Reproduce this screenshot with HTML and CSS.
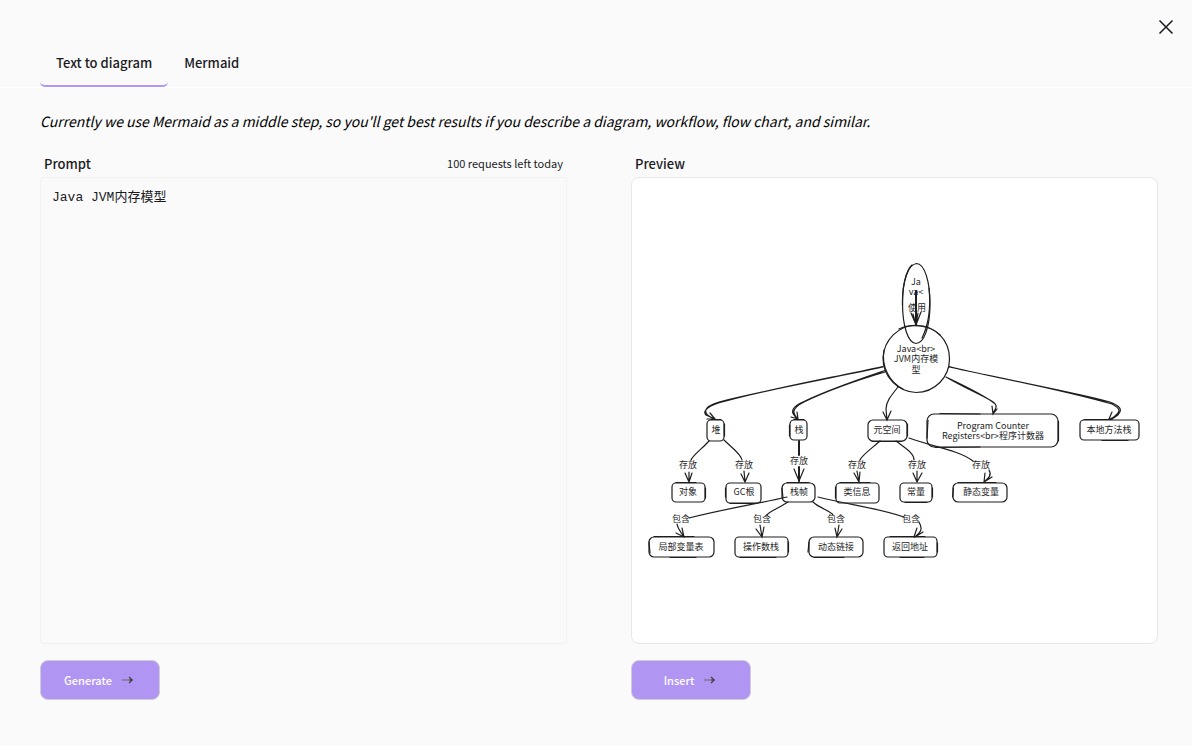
FILE: index.html
```html
<!DOCTYPE html>
<html lang="en">
<head>
    <meta charset="UTF-8">
    <meta name="viewport" content="width=device-width, initial-scale=1.0">
    <title>Text to diagram</title>
    <link rel="stylesheet" href="styles.css">
</head>
<body>

    <button type="button" class="close" aria-label="Close">
        <svg viewBox="0 0 16 16" width="16" height="16"><path d="M1.5 1.5l13 13M14.5 1.5l-13 13"/></svg>
    </button>

    <!-- Tabs -->
    <header class="tabs" role="tablist">
        <button type="button" class="tab active" role="tab" aria-selected="true">Text to diagram</button>
        <button type="button" class="tab" role="tab" aria-selected="false">Mermaid</button>
    </header>

    <main>
        <p class="description">Currently we use Mermaid as a middle step, so you'll get best results if you describe a diagram, workflow, flow chart, and similar.</p>

        <div class="panels">
            <!-- Prompt -->
            <section class="panel">
                <div class="panel-header">
                    <label for="prompt">Prompt</label>
                    <span class="limit">100 requests left today</span>
                </div>
                <textarea id="prompt" class="panel-box">Java JVM内存模型</textarea>
                <button type="button" class="action">
                    Generate
                    <svg viewBox="0 0 16 16" width="16" height="16"><path class="shaft" d="M2 8h8"/><path d="M9 4.8l3.200 3.200-3.200 3.200M9 8h3"/></svg>
                </button>
            </section>

            <!-- Preview -->
            <section class="panel">
                <div class="panel-header">
                    <h2>Preview</h2>
                </div>
                <div class="panel-box preview">
                    <svg class="diagram" viewBox="632 178 525 465" role="img" aria-label="Preview">
                        <!-- start node and main circle -->
                        <path d="M916 263.500C925 263 930 283 930 304C930 327 924 343.500 916 343.500C908 343 902.500 326 902.500 303C902.500 281 908 264 917 263.500"/>
                        <path d="M912 265C906 270 902 287 902.500 305M929 288C931 308 928 326 922 338"/>
                        <path d="M916 325.500C935 325 949.500 340 949.500 359C949.500 377 935 392.500 916 392.500C898 392 883 377 883 358C884 340 898 325.500 917 325"/>
                        <path d="M884 350C881 367 890 383 903 389M899 329C911 323 930 325 940 335"/>
                        <path class="bold" d="M916 291v33"/>
                        <path d="M911 313l5 12 5-13M913 314l3 11 2-12"/>

                        <!-- edges: circle to first row -->
                        <path d="M883 366.500C825 379 770 389 726 401C708 405 702 411 706 415L715 419M883 367C822 380 762 391 719 402C702 407 702 414 715 419M707 419l8 0-5-6"/>
                        <path d="M885 370.500C860 379 830 389 805 401C791 407 789 412 798 419M885 372C858 380 829 390 804 402C790 409 793 414 798 419M791 417l7 2-1-7"/>
                        <path d="M898 387C890 397 886 402 886 409L887 420M883 412l4 8 4-9"/>
                        <path d="M946 377C963 387 977 393 990 400C997 404 998 406 993 413M946 377C965 386 985 396 994 403M992 406l1 8 4-5"/>
                        <path d="M949 366.500C1000 379 1064 390 1110 402C1123 407 1124 412 1112 419M949 367C1004 379 1060 389 1112 404C1121 409 1122 411 1111 419M1109 419l3-7M1110 419l8-4"/>

                        <!-- edges: first row to second row -->
                        <path d="M709 441C703 448 693 455 691 460M689 472v10M685 473l4 9 3-9"/>
                        <path d="M724 440C731 447 741 454 742 460M744 471l1 11M741 474l4 8 4-9"/>
                        <path class="bold" d="M799 441v14M799 467v14"/>
                        <path d="M794 469l5 12 5-12"/>
                        <path d="M880 441C871 449 862 455 860 460M857 471l2 11M854 473l5 9 1-10"/>
                        <path d="M896 441C905 448 914 453 914 460M917 471v11M913 473l4 9 5-9"/>
                        <path d="M909 438C930 446 959 450 973 461M989 470C992 475 989 478 984 482M984 482l1-9M984 482l8-5"/>

                        <!-- edges: second row to third row -->
                        <path d="M787 497C757 504 724 509 689 518M677 524C678 530 682 533 684 537M676 533l8 4-2-9"/>
                        <path d="M788 502C779 508 770 511 767 515M760 525l2 12M756 529l6 8 2-10"/>
                        <path d="M813 502C819 508 831 511 833 515M839 525l-2 12M835 528l2 9 5-8"/>
                        <path d="M818 497C850 505 878 508 904 517M919 522C923 529 921 532 915 537M914 537l3-9M915 537l8-5"/>

                        <!-- nodes -->
                        <rect x="707" y="420" width="17" height="21" rx="4"/>
                        <rect x="790" y="420" width="17" height="20" rx="4"/>
                        <rect x="868" y="420" width="39" height="21" rx="5"/>
                        <rect x="927" y="414" width="131" height="33" rx="7"/>
                        <rect x="1080" y="420" width="59" height="20" rx="4"/>
                        <rect x="672" y="483" width="33" height="19" rx="4"/>
                        <rect x="726" y="483" width="35" height="20" rx="4"/>
                        <rect x="782" y="483" width="33" height="19" rx="5"/>
                        <rect x="836" y="483" width="43" height="20" rx="4"/>
                        <rect x="900" y="483" width="32" height="19" rx="4"/>
                        <rect x="953" y="483" width="54" height="19" rx="5"/>
                        <rect x="649" y="537" width="65" height="20" rx="5"/>
                        <rect x="735" y="537" width="53" height="20" rx="4"/>
                        <rect x="809" y="537" width="54" height="20" rx="5"/>
                        <rect x="884" y="537" width="53" height="20" rx="4"/>
                        <path d="M711 419.500h10M724.500 424v12M794 419.500h10M789.500 425v11M872 441.500h30M907.500 424v12M940 413.500l40 .5M928 420l-1 18M935 447.500l45-.5M1058.500 421v20M1084 419.500h28M1102 440.500h26M676 482.500h20M705.500 488v10M730 503.500h26M725.500 488v9M787 482.500h22M782 488l1 10M840 482.500h30M835.500 487v11M905 502.500h22M932.500 488v9M958 482.500h38M953.500 488l-1 9M654 536.500h40M670 557.500h26M649 542l1 11M740 557.500h36M788.500 542v10M814 557.500h30M809 542l-1 10M890 536.500h35M937.500 543v9M900 557.500h24"/>

                        <!-- labels -->
                        <g class="labels">
                            <text x="916" y="285">Ja</text>
                            <text x="916" y="295">va&lt;</text>
                            <text x="917" y="311">使用</text>
                            <text x="916" y="352">Java&lt;br&gt;</text>
                            <text x="916" y="362">JVM内存模</text>
                            <text x="916" y="373">型</text>
                            <text x="716" y="433">堆</text>
                            <text x="799" y="433">栈</text>
                            <text x="887" y="433">元空间</text>
                            <text x="993" y="429">Program Counter</text>
                            <text x="993" y="439">Registers&lt;br&gt;程序计数器</text>
                            <text x="1109" y="433">本地方法栈</text>
                            <text x="688" y="468">存放</text>
                            <text x="744" y="468">存放</text>
                            <text x="799" y="464">存放</text>
                            <text x="857" y="468">存放</text>
                            <text x="917" y="468">存放</text>
                            <text x="981" y="468">存放</text>
                            <text x="688" y="495">对象</text>
                            <text x="744" y="495">GC根</text>
                            <text x="799" y="495">栈帧</text>
                            <text x="857" y="495">类信息</text>
                            <text x="916" y="495">常量</text>
                            <text x="981" y="495">静态变量</text>
                            <text x="681" y="522">包含</text>
                            <text x="762" y="522">包含</text>
                            <text x="836" y="522">包含</text>
                            <text x="911" y="522">包含</text>
                            <text x="681" y="550">局部变量表</text>
                            <text x="761" y="550">操作数栈</text>
                            <text x="836" y="550">动态链接</text>
                            <text x="910" y="550">返回地址</text>
                        </g>
                    </svg>
                </div>
                <button type="button" class="action">
                    Insert
                    <svg viewBox="0 0 16 16" width="16" height="16"><path class="shaft" d="M2 8h8"/><path d="M9 4.800l3.200 3.200-3.200 3.200M9 8h3"/></svg>
                </button>
            </section>
        </div>
    </main>

</body>
</html>
```
FILE: styles.css
```css
* {
    box-sizing: border-box;
}
body {
    display: flex;
    flex-direction: column;
    min-height: 100vh;
    margin: 0;
    background-color: #fafafa;
    color: #1b1b1f;
    font-family: "Noto Sans CJK SC", "Open Sans", sans-serif;
}
button {
    font-family: inherit;
    cursor: pointer;
}
.close {
    position: absolute;
    top: 16px;
    right: 15px;
    padding: 3px;
    border: none;
    background: none;
    line-height: 0;
}
.close svg {
    fill: none;
    stroke: #1b1b1f;
    stroke-width: 1.5;
}
.tabs {
    display: flex;
    padding: 40px 40px 0;
    border-bottom: 1px solid #fff;
}
.tab {
    height: 47px;
    padding: 0 16px;
    border: none;
    border-bottom: 2px solid transparent;
    border-radius: 5px;
    background: none;
    color: #1b1b1f;
    font-size: 13px;
    font-weight: 500;
}
.tab.active {
    border-bottom-color: #b197f4;
}
main {
    display: flex;
    flex: 1;
    flex-direction: column;
    padding: 23px 34px 47px 40px;
}
.description {
    margin: 0 0 22px;
    color: #000;
    font-size: 14px;
    font-style: italic;
    line-height: 20px;
}
.panels {
    display: grid;
    flex: 1;
    grid-template-columns: 1fr 1fr;
    gap: 64px;
}
.panel {
    display: flex;
    flex-direction: column;
    min-width: 0;
}
.panel-header {
    display: flex;
    justify-content: space-between;
    align-items: center;
    height: 20px;
    margin-bottom: 4px;
    padding: 0 4px;
}
.panel-header label, .panel-header h2 {
    margin: 0;
    font-size: 13px;
    font-weight: 500;
}
.limit {
    font-size: 11px;
}
.panel-box {
    flex: 1;
    width: 100%;
    margin-bottom: 16px;
    border: 1px solid #f1f1f1;
    border-radius: 4px;
}
textarea {
    padding: 11px;
    background-color: #fafafa;
    color: #1b1b1f;
    font-family: "Liberation Mono", "Noto Sans CJK SC", monospace;
    font-size: 13px;
    line-height: 18px;
    resize: none;
    outline: none;
}
.preview {
    display: flex;
    border-color: #e8e8e8;
    border-radius: 8px;
    background-color: #fff;
}
.diagram {
    width: 100%;
    fill: none;
    stroke: #1e1e1e;
    stroke-width: 1.2;
    stroke-linecap: round;
}
.diagram .bold {
    stroke-width: 2;
}
.labels {
    fill: #1e1e1e;
    stroke: none;
    font-size: 9px;
    text-anchor: middle;
}
.action {
    display: flex;
    justify-content: center;
    align-items: center;
    gap: 8px;
    width: 120px;
    height: 40px;
    border: 1px solid #cfcbd8;
    border-radius: 8px;
    background-color: #b095f2;
    color: #fff;
    font-size: 11px;
    font-weight: 500;
}
.action svg {
    fill: none;
    stroke: #3d3d3d;
    stroke-width: 1.2;
}
.action .shaft {
    stroke: #77737f;
}
```
